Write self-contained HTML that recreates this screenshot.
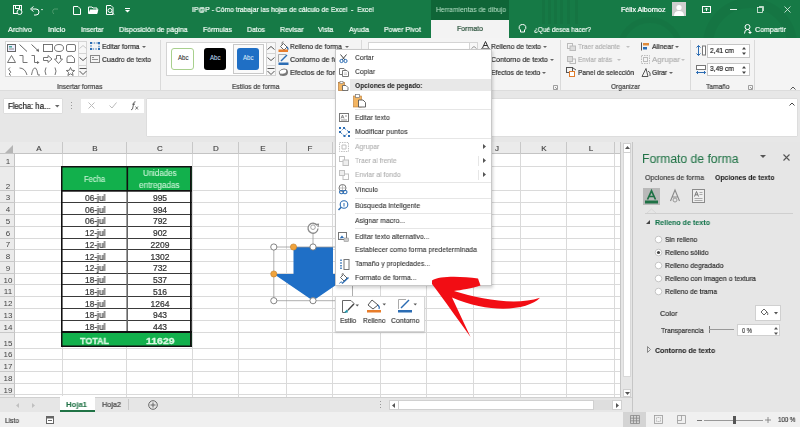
<!DOCTYPE html><html><head><meta charset="utf-8"><style>
*{margin:0;padding:0;box-sizing:border-box}
html,body{width:800px;height:427px;overflow:hidden;background:#fff;font-family:"Liberation Sans",sans-serif;position:relative}
.abs{position:absolute}
svg.abs{overflow:visible}
.t{position:absolute;white-space:nowrap;line-height:1;transform-origin:0 0;-webkit-text-stroke:0.22px currentColor;will-change:transform}
.b{-webkit-text-stroke:0.05px currentColor}
</style></head><body>
<div class="abs" style="left:0px;top:0px;width:800px;height:38px;background:#167a46"></div>
<svg class="abs" style="left:520px;top:0px;" width="280" height="38" viewBox="0 0 280 38"><rect x="22" y="0" width="3" height="24" fill="rgba(0,0,0,0.045)"/><rect x="28" y="0" width="3" height="24" fill="rgba(0,0,0,0.045)"/><rect x="34" y="0" width="3" height="24" fill="rgba(0,0,0,0.045)"/><rect x="40" y="0" width="3" height="24" fill="rgba(0,0,0,0.045)"/><rect x="47" y="0" width="3" height="24" fill="rgba(0,0,0,0.045)"/><rect x="55" y="0" width="3" height="24" fill="rgba(0,0,0,0.045)"/><circle cx="230" cy="45" r="42" fill="none" stroke="rgba(0,0,0,0.04)" stroke-width="10"/><circle cx="130" cy="50" r="30" fill="none" stroke="rgba(0,0,0,0.035)" stroke-width="6"/></svg>
<div class="abs" style="left:431px;top:0px;width:78px;height:19.5px;background:#0f6537"></div>
<div class="abs" style="left:431px;top:20px;width:78px;height:18px;background:#f3f3f3"></div>
<div class="t" style="left:436px;top:6.07px;font-size:7px;color:#b9e3c9;transform:scaleX(0.967);-webkit-text-stroke:0">Herramientas de dibujo</div>
<div class="t" style="left:457px;top:25.20px;font-size:7.8px;color:#2a523b;transform:scaleX(0.895);">Formato</div>
<div class="t" style="left:191.6px;top:6.11px;font-size:7.2px;color:#f2fbf5;transform:scaleX(0.941);">IP@P - Cómo trabajar las hojas de cálculo de Excel  -  Excel</div>
<div class="t" style="left:621px;top:6.07px;font-size:7px;color:#fff;transform:scaleX(1.012);">Félix Albornoz</div>
<div class="abs" style="left:672px;top:2px;width:14px;height:14px;background:#cfcfcf"></div>
<svg class="abs" style="left:672px;top:2px;" width="14" height="14" viewBox="0 0 14 14"><circle cx="7" cy="5.5" r="2.6" fill="#fff"/><path d="M2 14 Q2 9 7 9 Q12 9 12 14Z" fill="#fff"/></svg>
<div class="t" style="left:8px;top:25.65px;font-size:7.5px;color:#f2fbf5;transform:scaleX(0.960);">Archivo</div>
<div class="t" style="left:47.5px;top:25.65px;font-size:7.5px;color:#f2fbf5;transform:scaleX(1.000);">Inicio</div>
<div class="t" style="left:80.5px;top:25.65px;font-size:7.5px;color:#f2fbf5;transform:scaleX(0.885);">Insertar</div>
<div class="t" style="left:119px;top:25.65px;font-size:7.5px;color:#f2fbf5;transform:scaleX(0.934);">Disposición de página</div>
<div class="t" style="left:202.5px;top:25.65px;font-size:7.5px;color:#f2fbf5;transform:scaleX(0.928);">Fórmulas</div>
<div class="t" style="left:247.4px;top:25.65px;font-size:7.5px;color:#f2fbf5;transform:scaleX(0.919);">Datos</div>
<div class="t" style="left:280px;top:25.65px;font-size:7.5px;color:#f2fbf5;transform:scaleX(0.928);">Revisar</div>
<div class="t" style="left:317.5px;top:25.65px;font-size:7.5px;color:#f2fbf5;transform:scaleX(0.925);">Vista</div>
<div class="t" style="left:348.5px;top:25.65px;font-size:7.5px;color:#f2fbf5;transform:scaleX(0.947);">Ayuda</div>
<div class="t" style="left:384px;top:25.65px;font-size:7.5px;color:#f2fbf5;transform:scaleX(0.920);">Power Pivot</div>
<div class="t" style="left:534px;top:25.65px;font-size:7.5px;color:#f2fbf5;transform:scaleX(0.860);">¿Qué desea hacer?</div>
<div class="t" style="left:755px;top:25.65px;font-size:7.5px;color:#f2fbf5;transform:scaleX(0.942);">Compartir</div>
<svg class="abs" style="left:13px;top:5px;" width="10" height="10" viewBox="0 0 10 10"><rect x="0.5" y="0.5" width="8" height="8" fill="none" stroke="#fff" stroke-width="1"/><rect x="2.5" y="0.5" width="4" height="3" fill="none" stroke="#fff" stroke-width="1"/><circle cx="6.5" cy="7" r="2.5" fill="#167a46" stroke="#fff"/></svg>
<svg class="abs" style="left:30px;top:6px;" width="14" height="9" viewBox="0 0 14 9"><path d="M2 3 H6 A3 3 0 0 1 6 9 H4" fill="none" stroke="#fff" stroke-width="1"/><path d="M0.5 3 L3.5 0.5 M0.5 3 L3.5 5.5" fill="none" stroke="#fff" stroke-width="1"/><path d="M11 3 l2 0 l-1 1.5z" fill="#fff"/></svg>
<svg class="abs" style="left:51px;top:6px;" width="8" height="8" viewBox="0 0 8 8"><path d="M7 3 H3 A3 3 0 0 0 3 8" fill="none" stroke="#4c9a6c"/></svg>
<svg class="abs" style="left:73px;top:6px;" width="8" height="9" viewBox="0 0 8 9"><path d="M0.5 0.5 H5 L7.5 3 V8.5 H0.5Z" fill="none" stroke="#fff" stroke-width="1"/></svg>
<svg class="abs" style="left:88px;top:6px;" width="11" height="8" viewBox="0 0 11 8"><path d="M0.5 1 H4 L5 2 H9 V7.5 H0.5Z" fill="none" stroke="#fff" stroke-width="1"/><path d="M2 3.5 H10.5 L9 7.5 H0.5Z" fill="#fff"/></svg>
<svg class="abs" style="left:106px;top:5px;" width="9" height="10" viewBox="0 0 9 10"><path d="M0.5 0.5 H5 L7 2.5 V9.5 H0.5Z" fill="none" stroke="#fff" stroke-width="1"/><circle cx="4" cy="5.5" r="2" fill="none" stroke="#fff" stroke-width="1"/><path d="M5.5 7 L8 9.5" fill="none" stroke="#fff" stroke-width="1"/></svg>
<svg class="abs" style="left:125px;top:8px;" width="5" height="5" viewBox="0 0 5 5"><path d="M0 0.5 H5" stroke="#fff"/><path d="M0 2 L5 2 L2.5 4.5Z" fill="#fff"/></svg>
<svg class="abs" style="left:702px;top:6px;" width="9" height="7" viewBox="0 0 9 7"><rect x="0.5" y="0.5" width="8" height="6" fill="none" stroke="#fff" stroke-width="1"/><path d="M4.5 5 V2 M3 3.5 L4.5 2 L6 3.5" fill="none" stroke="#fff" stroke-width="1"/></svg>
<div class="abs" style="left:730px;top:9px;width:7px;height:0.8px;background:#e6f2ea"></div>
<svg class="abs" style="left:757px;top:6px;" width="7" height="7" viewBox="0 0 7 7"><rect x="0.5" y="1.5" width="5" height="5" fill="none" stroke="#e6f2ea" stroke-width="0.8"/><path d="M2 0.5 H6.5 V5" fill="none" stroke="#e6f2ea" stroke-width="0.8"/></svg>
<svg class="abs" style="left:784px;top:6px;" width="7" height="7" viewBox="0 0 7 7"><path d="M0.5 0.5 L6.5 6.5 M6.5 0.5 L0.5 6.5" fill="none" stroke="#e6f2ea" stroke-width="0.8"/></svg>
<svg class="abs" style="left:519px;top:24px;" width="7" height="10" viewBox="0 0 7 10"><path d="M3.5 0.5 A3 3 0 0 1 5.5 6 V8 H1.5 V6 A3 3 0 0 1 3.5 0.5Z" fill="none" stroke="#fff" stroke-width="1"/></svg>
<svg class="abs" style="left:744px;top:24px;" width="8" height="10" viewBox="0 0 8 10"><circle cx="3.5" cy="3" r="2.5" fill="none" stroke="#fff" stroke-width="1"/><path d="M0.5 9.5 Q0.5 5.5 3.5 5.5 Q5.5 5.5 6 7" fill="none" stroke="#fff" stroke-width="1"/><path d="M6 7 V10 M4.5 8.5 H7.5" fill="none" stroke="#fff" stroke-width="1"/></svg>
<div class="abs" style="left:0px;top:38px;width:800px;height:53px;background:#f4f4f4;border-bottom:1px solid #dcdcdc"></div>
<div class="abs" style="left:5px;top:41.4px;width:82px;height:36px;background:#fff;border:1px solid #d4d4d4"></div>
<div class="abs" style="left:77.5px;top:41.4px;width:9.5px;height:36px;background:#f7f7f7;border:1px solid #d4d4d4"></div>
<div class="abs" style="left:77.5px;top:53px;width:9.5px;height:1px;background:#d4d4d4"></div>
<div class="abs" style="left:77.5px;top:65px;width:9.5px;height:1px;background:#d4d4d4"></div>
<svg class="abs" style="left:78.5px;top:45px;" width="8" height="4" viewBox="0 0 8 4"><path d="M0.5 3.5 L4 0.5 L7.5 3.5" fill="none" stroke="#c8c8c8"/></svg>
<svg class="abs" style="left:78.5px;top:57px;" width="8" height="4" viewBox="0 0 8 4"><path d="M0.5 0.5 L4 3.5 L7.5 0.5" fill="none" stroke="#555"/></svg>
<svg class="abs" style="left:78.5px;top:67.5px;" width="8" height="7" viewBox="0 0 8 7"><path d="M0.5 0.5 H7.5 M0.5 3 L4 6.5 L7.5 3" fill="none" stroke="#555"/></svg>
<svg class="abs" style="left:7.1px;top:43.6px;" width="10" height="9" viewBox="0 0 10 9"><rect x="0.5" y="0.5" width="8" height="7" fill="#eef" stroke="#666"/><rect x="2" y="2" width="3" height="1.5" fill="#4a9"/><path d="M2 5 H7" stroke="#888"/></svg>
<svg class="abs" style="left:19.3px;top:43.6px;" width="10" height="9" viewBox="0 0 10 9"><path d="M0.5 0.5 L8 7.5" stroke="#666"/></svg>
<svg class="abs" style="left:30.9px;top:43.6px;" width="10" height="9" viewBox="0 0 10 9"><path d="M0.5 0.5 L8 7.5" stroke="#666"/><path d="M8 7.5 L5 7 L7.5 4.5Z" fill="#666"/></svg>
<svg class="abs" style="left:42.5px;top:43.6px;" width="10" height="9" viewBox="0 0 10 9"><rect x="0.5" y="0.5" width="9" height="7" fill="none" stroke="#666" stroke-width="0.9"/></svg>
<svg class="abs" style="left:54.0px;top:43.6px;" width="10" height="9" viewBox="0 0 10 9"><ellipse cx="5" cy="4" rx="4.5" ry="3.5" fill="none" stroke="#666" stroke-width="0.9"/></svg>
<svg class="abs" style="left:65.8px;top:43.6px;" width="10" height="9" viewBox="0 0 10 9"><rect x="0.5" y="0.5" width="9" height="7" rx="1.5" fill="none" stroke="#666" stroke-width="0.9"/></svg>
<svg class="abs" style="left:7.1px;top:55.1px;" width="10" height="9" viewBox="0 0 10 9"><path d="M4.5 0.5 L8.5 7.5 H0.5Z" fill="none" stroke="#666" stroke-width="0.9"/></svg>
<svg class="abs" style="left:19.3px;top:55.1px;" width="10" height="9" viewBox="0 0 10 9"><path d="M0.5 0.5 H4 V7.5 H8.5" fill="none" stroke="#666" stroke-width="0.9"/></svg>
<svg class="abs" style="left:30.9px;top:55.1px;" width="10" height="9" viewBox="0 0 10 9"><path d="M0.5 0.5 H3.5 V7.5 H7" fill="none" stroke="#666" stroke-width="0.9"/><path d="M8.5 7.5 L6 6 V9Z" fill="#666"/></svg>
<svg class="abs" style="left:42.5px;top:55.1px;" width="10" height="9" viewBox="0 0 10 9"><path d="M0.5 2.5 H5 V0.5 L9 4 L5 7.5 V5.5 H0.5Z" fill="none" stroke="#666" stroke-width="0.9"/></svg>
<svg class="abs" style="left:54.0px;top:55.1px;" width="10" height="9" viewBox="0 0 10 9"><path d="M2.5 0.5 H6.5 V4 H8.5 L4.5 8.5 L0.5 4 H2.5Z" fill="none" stroke="#666" stroke-width="0.9"/></svg>
<svg class="abs" style="left:65.8px;top:55.1px;" width="10" height="9" viewBox="0 0 10 9"><path d="M1 7.5 V3 Q1 0.5 4 1 Q6 0 7 2 Q9 3 8.5 5 V7.5Z" fill="none" stroke="#666" stroke-width="0.9"/></svg>
<svg class="abs" style="left:7.1px;top:67.2px;" width="10" height="9" viewBox="0 0 10 9"><path d="M3 0.5 Q0 2 3 4 Q5 5 2 7 L4 8.5" fill="none" stroke="#666" stroke-width="0.9"/></svg>
<svg class="abs" style="left:19.3px;top:67.2px;" width="10" height="9" viewBox="0 0 10 9"><path d="M0.5 1 Q6 1 8 8" fill="none" stroke="#666" stroke-width="0.9"/></svg>
<svg class="abs" style="left:30.9px;top:67.2px;" width="10" height="9" viewBox="0 0 10 9"><path d="M0.5 8 Q2 0 4.5 1 Q6 2 7 8 H9" fill="none" stroke="#666" stroke-width="0.9"/></svg>
<svg class="abs" style="left:42.5px;top:67.2px;" width="10" height="9" viewBox="0 0 10 9"><path d="M3 0.5 Q1 4 3 8" fill="none" stroke="#666" stroke-width="0.9"/></svg>
<svg class="abs" style="left:54.0px;top:67.2px;" width="10" height="9" viewBox="0 0 10 9"><path d="M1 0.5 Q3 4 1 8" fill="none" stroke="#666" stroke-width="0.9"/></svg>
<svg class="abs" style="left:65.8px;top:67.2px;" width="10" height="9" viewBox="0 0 10 9"><path d="M4.5 0.5 L5.7 3.3 L8.7 3.5 L6.4 5.4 L7.1 8.5 L4.5 6.8 L1.9 8.5 L2.6 5.4 L0.3 3.5 L3.3 3.3Z" fill="none" stroke="#666" stroke-width="0.9"/></svg>
<svg class="abs" style="left:90px;top:42px;" width="10" height="8" viewBox="0 0 10 8"><rect x="1" y="1" width="8" height="6" fill="none" stroke="#2b6cb3" stroke-dasharray="1.5 1.2"/><rect x="0" y="0" width="2" height="2" fill="#2b6cb3"/><rect x="8" y="0" width="2" height="2" fill="#2b6cb3"/><rect x="0" y="6" width="2" height="2" fill="#2b6cb3"/><rect x="8" y="6" width="2" height="2" fill="#2b6cb3"/></svg>
<div class="t" style="left:102px;top:42.73px;font-size:8px;color:#333;transform:scaleX(0.861);">Editar forma</div>
<svg class="abs" style="left:141.5px;top:45.8px;" width="4" height="2" viewBox="0 0 4 2"><path d="M0 0 H4 L2 2Z" fill="#666"/></svg>
<svg class="abs" style="left:90px;top:55px;" width="10" height="8" viewBox="0 0 10 8"><rect x="0.5" y="0.5" width="9" height="7" fill="#f4f4f4" stroke="#888"/><path d="M2 2.5 H4 M2 4.5 H8" stroke="#777" stroke-width="0.8"/></svg>
<div class="t" style="left:102px;top:55.73px;font-size:8px;color:#333;transform:scaleX(0.861);">Cuadro de texto</div>
<div class="t" style="left:57px;top:83.45px;font-size:7.5px;color:#444;transform:scaleX(0.902);">Insertar formas</div>
<div class="abs" style="left:159.5px;top:40px;width:1px;height:50px;background:#dadada"></div>
<div class="abs" style="left:165.5px;top:42px;width:110px;height:34px;background:#fff;border:1px solid #d4d4d4"></div>
<div class="abs" style="left:171px;top:47.8px;width:23px;height:21.8px;background:#fff;border:1px solid #a8d08d;border-radius:3px"></div>
<div class="t" style="left:177.5px;top:54.07px;font-size:7px;color:#333;transform:scaleX(0.871);-webkit-text-stroke:0.1px currentColor;will-change:auto">Abc</div>
<div class="abs" style="left:204px;top:47.8px;width:22px;height:21.8px;background:#000;border-radius:3px"></div>
<div class="t" style="left:210px;top:54.07px;font-size:7px;color:#b8d3ea;transform:scaleX(0.871);-webkit-text-stroke:0.1px currentColor;will-change:auto">Abc</div>
<div class="abs" style="left:232.5px;top:43.5px;width:31.5px;height:30.5px;background:#fafafa;border:1.5px solid #c8c8c8"></div>
<div class="abs" style="left:237px;top:47.8px;width:22px;height:21.8px;background:#1f6fc5;border-radius:3px"></div>
<div class="t" style="left:243px;top:54.07px;font-size:7px;color:#d5e6f7;transform:scaleX(0.871);-webkit-text-stroke:0.1px currentColor;will-change:auto">Abc</div>
<div class="abs" style="left:265.5px;top:42px;width:10px;height:34px;background:#f7f7f7;border:1px solid #d4d4d4"></div>
<div class="abs" style="left:265.5px;top:53px;width:10px;height:1px;background:#d4d4d4"></div>
<div class="abs" style="left:265.5px;top:65px;width:10px;height:1px;background:#d4d4d4"></div>
<svg class="abs" style="left:266.5px;top:45.5px;" width="8" height="4" viewBox="0 0 8 4"><path d="M0.5 3.5 L4 0.5 L7.5 3.5" fill="none" stroke="#555"/></svg>
<svg class="abs" style="left:266.5px;top:57px;" width="8" height="4" viewBox="0 0 8 4"><path d="M0.5 0.5 L4 3.5 L7.5 0.5" fill="none" stroke="#555"/></svg>
<svg class="abs" style="left:266.5px;top:67.5px;" width="8" height="7" viewBox="0 0 8 7"><path d="M0.5 0.5 H7.5 M0.5 3 L4 6.5 L7.5 3" fill="none" stroke="#555"/></svg>
<svg class="abs" style="left:277.5px;top:41px;" width="11" height="11" viewBox="0 0 11 11"><path d="M2.5 5.5 L5.5 2.5 L9 6 L6 9Z" fill="#fff" stroke="#555" stroke-width="0.9"/><path d="M4 3.5 Q3.5 0.5 5.5 0.8" fill="none" stroke="#555" stroke-width="0.8"/><path d="M9 6 Q10.5 7.5 9.8 9" fill="none" stroke="#2b6cb3" stroke-width="1.2"/><rect x="0.5" y="8.5" width="9.5" height="2.5" fill="#e87d2b"/></svg>
<div class="t" style="left:290px;top:42.73px;font-size:8px;color:#333;transform:scaleX(0.850);">Relleno de forma</div>
<svg class="abs" style="left:344.5px;top:45.8px;" width="4" height="2" viewBox="0 0 4 2"><path d="M0 0 H4 L2 2Z" fill="#666"/></svg>
<svg class="abs" style="left:277.5px;top:54px;" width="11" height="11" viewBox="0 0 11 11"><path d="M0.5 8 V0.5 H8" fill="none" stroke="#999" stroke-width="0.8"/><path d="M3 7 L9 1" stroke="#2b6cb3" stroke-width="1.4"/><rect x="0.5" y="8.5" width="10" height="2.5" fill="#2b6cb3"/></svg>
<div class="t" style="left:290px;top:55.73px;font-size:8px;color:#333;transform:scaleX(0.900);">Contorno de forma</div>
<svg class="abs" style="left:277.5px;top:67.5px;" width="11" height="9" viewBox="0 0 11 9"><path d="M2 7.5 Q0.5 4 3 2 Q6 0 9 1.5 Q11 4 9 7 Q6 8.5 2 7.5Z" fill="#777"/><path d="M1.5 6 Q0.5 3 3 1.8 Q6 0.5 8.5 1.5 Q9 4 7.5 5.5 Q5 6.5 1.5 6Z" fill="#fff" stroke="#666" stroke-width="0.7"/></svg>
<div class="t" style="left:290px;top:68.73px;font-size:8px;color:#333;transform:scaleX(0.910);">Efectos de forma</div>
<div class="t" style="left:231.5px;top:83.45px;font-size:7.5px;color:#444;transform:scaleX(0.883);">Estilos de forma</div>
<div class="abs" style="left:361px;top:40px;width:1px;height:50px;background:#dadada"></div>
<div class="abs" style="left:367.5px;top:41.5px;width:110px;height:35px;background:#fff;border:1px solid #d4d4d4"></div>
<div class="abs" style="left:469px;top:41.5px;width:8.5px;height:12px;background:#f7f7f7;border:1px solid #d4d4d4"></div>
<svg class="abs" style="left:470.5px;top:45.5px;" width="6" height="3" viewBox="0 0 6 3"><path d="M0.5 2.5 L3 0.5 L5.5 2.5" fill="none" stroke="#999"/></svg>
<svg class="abs" style="left:480.5px;top:41px;" width="9" height="9" viewBox="0 0 9 9"><path d="M1.5 7 L4.5 0.5 L7.5 7 M2.8 4.5 H6.2" fill="none" stroke="#333" stroke-width="1"/><rect x="0" y="7.5" width="9" height="1.3" fill="#222"/></svg>
<div class="t" style="left:491px;top:42.73px;font-size:8px;color:#333;transform:scaleX(0.865);">Relleno de texto</div>
<svg class="abs" style="left:542.5px;top:45.8px;" width="4" height="2" viewBox="0 0 4 2"><path d="M0 0 H4 L2 2Z" fill="#666"/></svg>
<div class="t" style="left:491px;top:55.73px;font-size:8px;color:#333;transform:scaleX(0.892);">Contorno de texto</div>
<svg class="abs" style="left:549.5px;top:58.8px;" width="4" height="2" viewBox="0 0 4 2"><path d="M0 0 H4 L2 2Z" fill="#666"/></svg>
<div class="t" style="left:491px;top:68.73px;font-size:8px;color:#333;transform:scaleX(0.858);">Efectos de texto</div>
<svg class="abs" style="left:542px;top:71.8px;" width="4" height="2" viewBox="0 0 4 2"><path d="M0 0 H4 L2 2Z" fill="#666"/></svg>
<svg class="abs" style="left:553px;top:85px;" width="5" height="5" viewBox="0 0 5 5"><path d="M0.5 0.5 H4.5 V4.5 H0.5Z M2 2 L4 4" fill="none" stroke="#888" stroke-width="0.8"/></svg>
<div class="abs" style="left:559.5px;top:40px;width:1px;height:50px;background:#dadada"></div>
<svg class="abs" style="left:566.5px;top:43px;" width="9" height="8" viewBox="0 0 9 8"><rect x="0.5" y="0.5" width="5" height="5" fill="none" stroke="#bbb"/><rect x="3" y="3" width="5.5" height="4.5" fill="#ddd" stroke="#bbb"/></svg>
<div class="t" style="left:578px;top:42.73px;font-size:8px;color:#b3b3b3;transform:scaleX(0.812);">Traer adelante</div>
<svg class="abs" style="left:626px;top:45.8px;" width="4" height="2" viewBox="0 0 4 2"><path d="M0 0 H4 L2 2Z" fill="#c0c0c0"/></svg>
<svg class="abs" style="left:566.5px;top:56px;" width="9" height="8" viewBox="0 0 9 8"><rect x="3" y="3" width="5.5" height="4.5" fill="none" stroke="#bbb"/><rect x="0.5" y="0.5" width="5" height="5" fill="#ddd" stroke="#bbb"/></svg>
<div class="t" style="left:578px;top:55.73px;font-size:8px;color:#b3b3b3;transform:scaleX(0.797);">Enviar atrás</div>
<svg class="abs" style="left:617px;top:58.8px;" width="4" height="2" viewBox="0 0 4 2"><path d="M0 0 H4 L2 2Z" fill="#c0c0c0"/></svg>
<svg class="abs" style="left:566px;top:67px;" width="11" height="10" viewBox="0 0 11 10"><rect x="0.5" y="0.5" width="6" height="5" fill="none" stroke="#555"/><rect x="3.5" y="4.5" width="5" height="5" fill="#fff" stroke="#e07b2a"/><path d="M7 1 L10 3" stroke="#555"/></svg>
<div class="t" style="left:578px;top:69.23px;font-size:8px;color:#333;transform:scaleX(0.834);">Panel de selección</div>
<svg class="abs" style="left:641px;top:42px;" width="9" height="9" viewBox="0 0 9 9"><path d="M0.5 0.5 V8.5" stroke="#555"/><rect x="2" y="1" width="6" height="2.5" fill="#e08b3a"/><rect x="2" y="5" width="4" height="2.5" fill="#2b6cb3"/></svg>
<div class="t" style="left:651.5px;top:42.73px;font-size:8px;color:#333;transform:scaleX(0.863);">Alinear</div>
<svg class="abs" style="left:675px;top:45.8px;" width="4" height="2" viewBox="0 0 4 2"><path d="M0 0 H4 L2 2Z" fill="#666"/></svg>
<svg class="abs" style="left:641px;top:55px;" width="9" height="9" viewBox="0 0 9 9"><rect x="0.5" y="0.5" width="8" height="8" fill="none" stroke="#bbb" stroke-dasharray="1.5 1"/><rect x="2.5" y="2.5" width="4" height="4" fill="none" stroke="#bbb"/></svg>
<div class="t" style="left:652px;top:55.73px;font-size:8px;color:#b3b3b3;transform:scaleX(0.984);">Agrupar</div>
<svg class="abs" style="left:681px;top:58.8px;" width="4" height="2" viewBox="0 0 4 2"><path d="M0 0 H4 L2 2Z" fill="#c0c0c0"/></svg>
<svg class="abs" style="left:641px;top:68px;" width="10" height="9" viewBox="0 0 10 9"><path d="M1 8.5 L5 0.5 L7 8.5Z" fill="none" stroke="#555"/><path d="M7 3 Q10 4 9 8" fill="none" stroke="#555"/></svg>
<div class="t" style="left:652px;top:69.23px;font-size:8px;color:#333;transform:scaleX(0.844);">Girar</div>
<svg class="abs" style="left:668.5px;top:71.8px;" width="4" height="2" viewBox="0 0 4 2"><path d="M0 0 H4 L2 2Z" fill="#666"/></svg>
<div class="t" style="left:610.5px;top:83.45px;font-size:7.5px;color:#444;transform:scaleX(0.881);">Organizar</div>
<div class="abs" style="left:689.5px;top:40px;width:1px;height:50px;background:#dadada"></div>
<svg class="abs" style="left:696px;top:45px;" width="10" height="11" viewBox="0 0 10 11"><path d="M2.5 0.5 V10.5 M0.5 2.5 L2.5 0.5 L4.5 2.5 M0.5 8.5 L2.5 10.5 L4.5 8.5" fill="none" stroke="#2b6cb3"/><rect x="6.5" y="1" width="3" height="9" fill="#fff" stroke="#777"/></svg>
<div class="abs" style="left:707px;top:44px;width:43px;height:13.5px;background:#fff;border:1px solid #c6c6c6"></div>
<div class="t" style="left:709.5px;top:46.73px;font-size:8px;color:#222;transform:scaleX(0.843);">2,41 cm</div>
<svg class="abs" style="left:742px;top:47px;" width="4" height="8" viewBox="0 0 4 8"><path d="M0 2.5 L2 0 L4 2.5Z M0 5.5 H4 L2 8Z" fill="#444"/></svg>
<svg class="abs" style="left:696px;top:65px;" width="10" height="10" viewBox="0 0 10 10"><rect x="0.5" y="0.5" width="9" height="4" fill="#fff" stroke="#777"/><path d="M0.5 7.5 H9.5 M2 6 L0.5 7.5 L2 9 M8 6 L9.5 7.5 L8 9" fill="none" stroke="#2b6cb3"/></svg>
<div class="abs" style="left:707px;top:62.5px;width:43px;height:13.5px;background:#fff;border:1px solid #c6c6c6"></div>
<div class="t" style="left:709.5px;top:65.23px;font-size:8px;color:#222;transform:scaleX(0.843);">3,49 cm</div>
<svg class="abs" style="left:742px;top:65.5px;" width="4" height="8" viewBox="0 0 4 8"><path d="M0 2.5 L2 0 L4 2.5Z M0 5.5 H4 L2 8Z" fill="#444"/></svg>
<div class="t" style="left:705.5px;top:83.45px;font-size:7.5px;color:#444;transform:scaleX(0.881);">Tamaño</div>
<svg class="abs" style="left:747.5px;top:85px;" width="5" height="5" viewBox="0 0 5 5"><path d="M0.5 0.5 H4.5 V4.5 H0.5Z M2 2 L4 4" fill="none" stroke="#888" stroke-width="0.8"/></svg>
<div class="abs" style="left:754px;top:40px;width:1px;height:50px;background:#dadada"></div>
<svg class="abs" style="left:789.5px;top:85.5px;" width="6" height="4" viewBox="0 0 6 4"><path d="M0.5 3.5 L3 1 L5.5 3.5" fill="none" stroke="#555"/></svg>
<div class="abs" style="left:0px;top:91px;width:800px;height:51px;background:#e7e7e7"></div>
<div class="abs" style="left:3.5px;top:98.5px;width:58.5px;height:14.5px;background:#fff;box-shadow:0 0 1px rgba(0,0,0,0.25)"></div>
<div class="t" style="left:7.5px;top:102.66px;font-size:8.2px;color:#222;transform:scaleX(0.942);">Flecha: ha...</div>
<svg class="abs" style="left:55px;top:104.5px;" width="4.5" height="2.5" viewBox="0 0 4.5 2.5"><path d="M0 0 H4.5 L2.25 2.5Z" fill="#666"/></svg>
<div class="abs" style="left:71px;top:102px;width:1px;height:1px;background:#999"></div>
<div class="abs" style="left:71px;top:105px;width:1px;height:1px;background:#999"></div>
<div class="abs" style="left:71px;top:108px;width:1px;height:1px;background:#999"></div>
<div class="abs" style="left:81px;top:99px;width:63px;height:14px;background:#fff"></div>
<svg class="abs" style="left:88px;top:102px;" width="7" height="7" viewBox="0 0 7 7"><path d="M0.5 0.5 L6.5 6.5 M6.5 0.5 L0.5 6.5" stroke="#bbb" fill="none"/></svg>
<svg class="abs" style="left:109px;top:102px;" width="8" height="7" viewBox="0 0 8 7"><path d="M0.5 3.5 L3 6 L7.5 0.5" stroke="#bbb" fill="none"/></svg>
<svg class="abs" style="left:130px;top:101px;" width="9" height="9" viewBox="0 0 9 9"><path d="M5.5 0.8 Q4.2 0.3 3.8 2 L2.5 8 Q2.1 9 1 8.6 M2.2 3.2 H5" fill="none" stroke="#555" stroke-width="0.9"/><path d="M5.5 5.5 L8 8.5 M8 5.5 L5.5 8.5" stroke="#555" stroke-width="0.8"/></svg>
<div class="abs" style="left:147px;top:99px;width:650px;height:37px;background:#fff;box-shadow:0 0 1px rgba(0,0,0,0.25)"></div>
<svg class="abs" style="left:789px;top:102px;" width="6" height="4" viewBox="0 0 6 4"><path d="M0.5 3.5 L3 1 L5.5 3.5" stroke="#444" fill="none"/></svg>
<div class="abs" style="left:0px;top:142px;width:621px;height:12px;background:#ebebeb;border-bottom:1px solid #c4c4c4"></div>
<div class="abs" style="left:0px;top:154px;width:15px;height:243px;background:#ebebeb;border-right:1px solid #c4c4c4"></div>
<svg class="abs" style="left:5px;top:145px;" width="8" height="8" viewBox="0 0 8 8"><path d="M8 0 V8 H0Z" fill="#b5b5b5"/></svg>
<svg class="abs" style="left:0px;top:142px;" width="621" height="255" viewBox="0 0 621 255"><rect x="62" y="0" width="1" height="255" fill="#dadada"/><rect x="62" y="0" width="1" height="12" fill="#c8c8c8"/><rect x="126" y="0" width="1" height="255" fill="#dadada"/><rect x="126" y="0" width="1" height="12" fill="#c8c8c8"/><rect x="192" y="0" width="1" height="255" fill="#dadada"/><rect x="192" y="0" width="1" height="12" fill="#c8c8c8"/><rect x="238" y="0" width="1" height="255" fill="#dadada"/><rect x="238" y="0" width="1" height="12" fill="#c8c8c8"/><rect x="286" y="0" width="1" height="255" fill="#dadada"/><rect x="286" y="0" width="1" height="12" fill="#c8c8c8"/><rect x="332" y="0" width="1" height="255" fill="#dadada"/><rect x="332" y="0" width="1" height="12" fill="#c8c8c8"/><rect x="380" y="0" width="1" height="255" fill="#dadada"/><rect x="380" y="0" width="1" height="12" fill="#c8c8c8"/><rect x="426" y="0" width="1" height="255" fill="#dadada"/><rect x="426" y="0" width="1" height="12" fill="#c8c8c8"/><rect x="473" y="0" width="1" height="255" fill="#dadada"/><rect x="473" y="0" width="1" height="12" fill="#c8c8c8"/><rect x="520" y="0" width="1" height="255" fill="#dadada"/><rect x="520" y="0" width="1" height="12" fill="#c8c8c8"/><rect x="566" y="0" width="1" height="255" fill="#dadada"/><rect x="566" y="0" width="1" height="12" fill="#c8c8c8"/><rect x="614" y="0" width="1" height="255" fill="#dadada"/><rect x="614" y="0" width="1" height="12" fill="#c8c8c8"/><rect x="15" y="24" width="606" height="1" fill="#dadada"/><rect x="0" y="24" width="15" height="1" fill="#c8c8c8"/><rect x="15" y="48" width="606" height="1" fill="#dadada"/><rect x="0" y="48" width="15" height="1" fill="#c8c8c8"/><rect x="15" y="60" width="606" height="1" fill="#dadada"/><rect x="0" y="60" width="15" height="1" fill="#c8c8c8"/><rect x="15" y="72" width="606" height="1" fill="#dadada"/><rect x="0" y="72" width="15" height="1" fill="#c8c8c8"/><rect x="15" y="84" width="606" height="1" fill="#dadada"/><rect x="0" y="84" width="15" height="1" fill="#c8c8c8"/><rect x="15" y="96" width="606" height="1" fill="#dadada"/><rect x="0" y="96" width="15" height="1" fill="#c8c8c8"/><rect x="15" y="107" width="606" height="1" fill="#dadada"/><rect x="0" y="107" width="15" height="1" fill="#c8c8c8"/><rect x="15" y="119" width="606" height="1" fill="#dadada"/><rect x="0" y="119" width="15" height="1" fill="#c8c8c8"/><rect x="15" y="131" width="606" height="1" fill="#dadada"/><rect x="0" y="131" width="15" height="1" fill="#c8c8c8"/><rect x="15" y="142" width="606" height="1" fill="#dadada"/><rect x="0" y="142" width="15" height="1" fill="#c8c8c8"/><rect x="15" y="154" width="606" height="1" fill="#dadada"/><rect x="0" y="154" width="15" height="1" fill="#c8c8c8"/><rect x="15" y="166" width="606" height="1" fill="#dadada"/><rect x="0" y="166" width="15" height="1" fill="#c8c8c8"/><rect x="15" y="178" width="606" height="1" fill="#dadada"/><rect x="0" y="178" width="15" height="1" fill="#c8c8c8"/><rect x="15" y="190" width="606" height="1" fill="#dadada"/><rect x="0" y="190" width="15" height="1" fill="#c8c8c8"/><rect x="15" y="206" width="606" height="1" fill="#dadada"/><rect x="0" y="206" width="15" height="1" fill="#c8c8c8"/><rect x="15" y="217" width="606" height="1" fill="#dadada"/><rect x="0" y="217" width="15" height="1" fill="#c8c8c8"/><rect x="15" y="229" width="606" height="1" fill="#dadada"/><rect x="0" y="229" width="15" height="1" fill="#c8c8c8"/><rect x="15" y="241" width="606" height="1" fill="#dadada"/><rect x="0" y="241" width="15" height="1" fill="#c8c8c8"/><rect x="15" y="252" width="606" height="1" fill="#dadada"/><rect x="0" y="252" width="15" height="1" fill="#c8c8c8"/></svg>
<div class="t" style="left:35.5px;top:145.23px;font-size:8px;color:#444;width:6px;text-align:center;-webkit-text-stroke:0.15px">A</div>
<div class="t" style="left:91.5px;top:145.23px;font-size:8px;color:#444;width:6px;text-align:center;-webkit-text-stroke:0.15px">B</div>
<div class="t" style="left:156.5px;top:145.23px;font-size:8px;color:#444;width:6px;text-align:center;-webkit-text-stroke:0.15px">C</div>
<div class="t" style="left:212.5px;top:145.23px;font-size:8px;color:#444;width:6px;text-align:center;-webkit-text-stroke:0.15px">D</div>
<div class="t" style="left:259.5px;top:145.23px;font-size:8px;color:#444;width:6px;text-align:center;-webkit-text-stroke:0.15px">E</div>
<div class="t" style="left:306.5px;top:145.23px;font-size:8px;color:#444;width:6px;text-align:center;-webkit-text-stroke:0.15px">F</div>
<div class="t" style="left:353.5px;top:145.23px;font-size:8px;color:#444;width:6px;text-align:center;-webkit-text-stroke:0.15px">G</div>
<div class="t" style="left:400.5px;top:145.23px;font-size:8px;color:#444;width:6px;text-align:center;-webkit-text-stroke:0.15px">H</div>
<div class="t" style="left:447.25px;top:145.23px;font-size:8px;color:#444;width:6px;text-align:center;-webkit-text-stroke:0.15px">I</div>
<div class="t" style="left:494.0px;top:145.23px;font-size:8px;color:#444;width:6px;text-align:center;-webkit-text-stroke:0.15px">J</div>
<div class="t" style="left:540.75px;top:145.23px;font-size:8px;color:#444;width:6px;text-align:center;-webkit-text-stroke:0.15px">K</div>
<div class="t" style="left:587.5px;top:145.23px;font-size:8px;color:#444;width:6px;text-align:center;-webkit-text-stroke:0.15px">L</div>
<div class="t" style="left:0.5px;top:157.63px;font-size:8px;color:#444;width:14px;text-align:center;-webkit-text-stroke:0">1</div>
<div class="t" style="left:0.5px;top:182.63px;font-size:8px;color:#444;width:14px;text-align:center;-webkit-text-stroke:0">2</div>
<div class="t" style="left:0.5px;top:194.38px;font-size:8px;color:#444;width:14px;text-align:center;-webkit-text-stroke:0">3</div>
<div class="t" style="left:0.5px;top:206.13px;font-size:8px;color:#444;width:14px;text-align:center;-webkit-text-stroke:0">4</div>
<div class="t" style="left:0.5px;top:217.88px;font-size:8px;color:#444;width:14px;text-align:center;-webkit-text-stroke:0">5</div>
<div class="t" style="left:0.5px;top:229.63px;font-size:8px;color:#444;width:14px;text-align:center;-webkit-text-stroke:0">6</div>
<div class="t" style="left:0.5px;top:241.38px;font-size:8px;color:#444;width:14px;text-align:center;-webkit-text-stroke:0">7</div>
<div class="t" style="left:0.5px;top:253.13px;font-size:8px;color:#444;width:14px;text-align:center;-webkit-text-stroke:0">8</div>
<div class="t" style="left:0.5px;top:264.88px;font-size:8px;color:#444;width:14px;text-align:center;-webkit-text-stroke:0">9</div>
<div class="t" style="left:0.5px;top:276.63px;font-size:8px;color:#444;width:14px;text-align:center;-webkit-text-stroke:0">10</div>
<div class="t" style="left:0.5px;top:288.38px;font-size:8px;color:#444;width:14px;text-align:center;-webkit-text-stroke:0">11</div>
<div class="t" style="left:0.5px;top:300.13px;font-size:8px;color:#444;width:14px;text-align:center;-webkit-text-stroke:0">12</div>
<div class="t" style="left:0.5px;top:311.88px;font-size:8px;color:#444;width:14px;text-align:center;-webkit-text-stroke:0">13</div>
<div class="t" style="left:0.5px;top:323.63px;font-size:8px;color:#444;width:14px;text-align:center;-webkit-text-stroke:0">14</div>
<div class="t" style="left:0.5px;top:339.63px;font-size:8px;color:#444;width:14px;text-align:center;-webkit-text-stroke:0">15</div>
<div class="t" style="left:0.5px;top:351.38px;font-size:8px;color:#444;width:14px;text-align:center;-webkit-text-stroke:0">16</div>
<div class="t" style="left:0.5px;top:363.13px;font-size:8px;color:#444;width:14px;text-align:center;-webkit-text-stroke:0">17</div>
<div class="t" style="left:0.5px;top:374.88px;font-size:8px;color:#444;width:14px;text-align:center;-webkit-text-stroke:0">18</div>
<div class="t" style="left:0.5px;top:386.63px;font-size:8px;color:#444;width:14px;text-align:center;-webkit-text-stroke:0">19</div>
<div class="abs" style="left:620px;top:142px;width:1px;height:255px;background:#c6c6c6"></div>
<div class="abs" style="left:621px;top:142px;width:12px;height:255px;background:#e6e6e6"></div>
<div class="abs" style="left:623px;top:143px;width:8px;height:234px;background:#fff;border:1px solid #d8d8d8"></div>
<div class="abs" style="left:623px;top:143px;width:8px;height:10px;background:#fff;border:1px solid #d0d0d0"></div>
<svg class="abs" style="left:624.5px;top:146px;" width="5" height="3" viewBox="0 0 5 3"><path d="M0 3 L2.5 0 L5 3Z" fill="#555"/></svg>
<div class="abs" style="left:623px;top:389px;width:8px;height:8px;background:#fff;border:1px solid #d0d0d0"></div>
<svg class="abs" style="left:624.5px;top:392px;" width="5" height="3" viewBox="0 0 5 3"><path d="M0 0 H5 L2.5 3Z" fill="#555"/></svg>
<div class="abs" style="left:632px;top:142px;width:1px;height:271px;background:#c6c6c6"></div>
<div class="abs" style="left:0px;top:397px;width:632px;height:15px;background:#e6e6e6;border-top:1px solid #d0d0d0"></div>
<svg class="abs" style="left:16px;top:403px;" width="3" height="5" viewBox="0 0 3 5"><path d="M3 0 L0 2.5 L3 5Z" fill="#c0c0c0"/></svg>
<svg class="abs" style="left:32px;top:403px;" width="3" height="5" viewBox="0 0 3 5"><path d="M0 0 L3 2.5 L0 5Z" fill="#c0c0c0"/></svg>
<div class="abs" style="left:60px;top:396px;width:35px;height:15px;background:#fff"></div>
<div class="abs" style="left:60px;top:410px;width:35px;height:1.5px;background:#217346"></div>
<div class="t b" style="left:66px;top:400.73px;font-size:8px;color:#217346;font-weight:bold;transform:scaleX(0.964);">Hoja1</div>
<div class="t" style="left:102px;top:400.73px;font-size:8px;color:#444;transform:scaleX(0.909);">Hoja2</div>
<div class="abs" style="left:128px;top:399px;width:1px;height:11px;background:#c8c8c8"></div>
<svg class="abs" style="left:148px;top:400px;" width="10" height="10" viewBox="0 0 10 10"><circle cx="5" cy="5" r="4.3" fill="none" stroke="#666"/><path d="M5 2.5 V7.5 M2.5 5 H7.5" stroke="#666"/></svg>
<div class="abs" style="left:379.5px;top:401px;width:1px;height:1px;background:#999"></div>
<div class="abs" style="left:379.5px;top:404px;width:1px;height:1px;background:#999"></div>
<div class="abs" style="left:379.5px;top:407px;width:1px;height:1px;background:#999"></div>
<div class="abs" style="left:389px;top:400px;width:233px;height:10px;background:#dedede"></div>
<div class="abs" style="left:389px;top:400px;width:10px;height:10px;background:#fff;border:1px solid #d0d0d0"></div>
<svg class="abs" style="left:392px;top:403px;" width="3" height="5" viewBox="0 0 3 5"><path d="M3 0 L0 2.5 L3 5Z" fill="#555"/></svg>
<div class="abs" style="left:398px;top:400px;width:196px;height:10px;background:#fff;border:1px solid #d0d0d0"></div>
<div class="abs" style="left:612px;top:400px;width:10px;height:10px;background:#fff;border:1px solid #d0d0d0"></div>
<svg class="abs" style="left:616px;top:403px;" width="3" height="5" viewBox="0 0 3 5"><path d="M0 0 L3 2.5 L0 5Z" fill="#555"/></svg>
<div class="abs" style="left:0px;top:412px;width:800px;height:15px;background:#f0f0f0"></div>
<div class="t" style="left:5px;top:416.85px;font-size:7.5px;color:#444;transform:scaleX(0.884);">Listo</div>
<svg class="abs" style="left:46px;top:416px;" width="8" height="8" viewBox="0 0 8 8"><rect x="0.5" y="0.5" width="7" height="7" fill="#fff" stroke="#666"/><rect x="0.5" y="0.5" width="7" height="2" fill="#666"/><rect x="2" y="4" width="4" height="1" fill="#666"/></svg>
<div class="abs" style="left:623px;top:412px;width:23px;height:15px;background:#d4d4d4"></div>
<svg class="abs" style="left:630px;top:415px;" width="10" height="9" viewBox="0 0 10 9"><path d="M0.5 0.5 H9.5 V8.5 H0.5Z M3.5 0.5 V8.5 M6.5 0.5 V8.5 M0.5 3.2 H9.5 M0.5 5.8 H9.5" fill="none" stroke="#888" stroke-width="0.8"/></svg>
<svg class="abs" style="left:654px;top:415px;" width="9" height="9" viewBox="0 0 9 9"><rect x="0.5" y="0.5" width="8" height="8" fill="none" stroke="#999" stroke-width="0.8"/><rect x="2.5" y="2.5" width="4" height="4" fill="none" stroke="#aaa" stroke-width="0.8" stroke-dasharray="1 0.6"/></svg>
<svg class="abs" style="left:677px;top:415px;" width="9" height="9" viewBox="0 0 9 9"><path d="M0.5 0.5 H8.5 V8.5 H0.5Z M0.5 5.5 H4.5 V0.5" fill="none" stroke="#999" stroke-width="0.8"/></svg>
<div class="abs" style="left:697px;top:419.5px;width:5px;height:0.8px;background:#777"></div>
<div class="abs" style="left:704px;top:419.5px;width:59px;height:1px;background:#999"></div>
<div class="abs" style="left:733px;top:416px;width:3px;height:8px;background:#555"></div>
<svg class="abs" style="left:765px;top:417px;" width="6" height="6" viewBox="0 0 6 6"><path d="M3 0 V6 M0 3 H6" stroke="#777" stroke-width="0.8"/></svg>
<div class="t" style="left:778px;top:416.15px;font-size:7.5px;color:#444;transform:scaleX(0.823);">100 %</div>
<div class="abs" style="left:61px;top:166px;width:131px;height:25px;background:#12b04c"></div>
<div class="abs" style="left:61px;top:332px;width:131px;height:15px;background:#12b04c"></div>
<svg class="abs" style="left:61px;top:166px;" width="131" height="181" viewBox="0 0 131 181"><rect x="0" y="36" width="131" height="1" fill="#3a3a3a"/><rect x="0" y="48" width="131" height="1" fill="#3a3a3a"/><rect x="0" y="60" width="131" height="1" fill="#3a3a3a"/><rect x="0" y="72" width="131" height="1" fill="#3a3a3a"/><rect x="0" y="83" width="131" height="1" fill="#3a3a3a"/><rect x="0" y="95" width="131" height="1" fill="#3a3a3a"/><rect x="0" y="107" width="131" height="1" fill="#3a3a3a"/><rect x="0" y="118" width="131" height="1" fill="#3a3a3a"/><rect x="0" y="130" width="131" height="1" fill="#3a3a3a"/><rect x="0" y="142" width="131" height="1" fill="#3a3a3a"/><rect x="0" y="154" width="131" height="1" fill="#3a3a3a"/><rect x="65.5" y="0" width="1.6" height="25" fill="#111"/><rect x="65.5" y="25" width="1.5" height="141" fill="#666"/><rect x="0" y="0" width="131" height="1.5" fill="#111"/><rect x="0" y="24" width="131" height="1.7" fill="#111"/><rect x="0" y="165" width="131" height="2" fill="#111"/><rect x="0" y="179.5" width="131" height="1.5" fill="#111"/><rect x="0" y="0" width="1.5" height="181" fill="#111"/><rect x="129" y="0" width="1.8" height="181" fill="#111"/></svg>
<div class="t" style="left:84.3px;top:174.50px;font-size:8.5px;color:#c9f3d6;transform:scaleX(0.889);-webkit-text-stroke:0.1px currentColor">Fecha</div>
<div class="t" style="left:142.5px;top:168.80px;font-size:8.5px;color:#c9f3d6;transform:scaleX(0.933);-webkit-text-stroke:0.1px currentColor">Unidades</div>
<div class="t" style="left:139px;top:180.80px;font-size:8.5px;color:#c9f3d6;transform:scaleX(0.955);-webkit-text-stroke:0.1px currentColor">entregadas</div>
<div class="t" style="left:84.5px;top:193.85px;font-size:8.5px;color:#333;transform:scaleX(0.977);">06-jul</div>
<div class="t" style="left:159.5px;top:193.85px;font-size:8.5px;color:#333;width:0;display:flex;justify-content:center">995</div>
<div class="t" style="left:84.5px;top:205.60px;font-size:8.5px;color:#333;transform:scaleX(0.977);">06-jul</div>
<div class="t" style="left:159.5px;top:205.60px;font-size:8.5px;color:#333;width:0;display:flex;justify-content:center">994</div>
<div class="t" style="left:84.5px;top:217.35px;font-size:8.5px;color:#333;transform:scaleX(0.977);">06-jul</div>
<div class="t" style="left:159.5px;top:217.35px;font-size:8.5px;color:#333;width:0;display:flex;justify-content:center">792</div>
<div class="t" style="left:84.5px;top:229.10px;font-size:8.5px;color:#333;transform:scaleX(0.977);">12-jul</div>
<div class="t" style="left:159.5px;top:229.10px;font-size:8.5px;color:#333;width:0;display:flex;justify-content:center">902</div>
<div class="t" style="left:84.5px;top:240.85px;font-size:8.5px;color:#333;transform:scaleX(0.977);">12-jul</div>
<div class="t" style="left:159.5px;top:240.85px;font-size:8.5px;color:#333;width:0;display:flex;justify-content:center">2209</div>
<div class="t" style="left:84.5px;top:252.60px;font-size:8.5px;color:#333;transform:scaleX(0.977);">12-jul</div>
<div class="t" style="left:159.5px;top:252.60px;font-size:8.5px;color:#333;width:0;display:flex;justify-content:center">1302</div>
<div class="t" style="left:84.5px;top:264.35px;font-size:8.5px;color:#333;transform:scaleX(0.977);">12-jul</div>
<div class="t" style="left:159.5px;top:264.35px;font-size:8.5px;color:#333;width:0;display:flex;justify-content:center">732</div>
<div class="t" style="left:84.5px;top:276.10px;font-size:8.5px;color:#333;transform:scaleX(0.977);">18-jul</div>
<div class="t" style="left:159.5px;top:276.10px;font-size:8.5px;color:#333;width:0;display:flex;justify-content:center">537</div>
<div class="t" style="left:84.5px;top:287.85px;font-size:8.5px;color:#333;transform:scaleX(0.977);">18-jul</div>
<div class="t" style="left:159.5px;top:287.85px;font-size:8.5px;color:#333;width:0;display:flex;justify-content:center">516</div>
<div class="t" style="left:84.5px;top:299.60px;font-size:8.5px;color:#333;transform:scaleX(0.977);">18-jul</div>
<div class="t" style="left:159.5px;top:299.60px;font-size:8.5px;color:#333;width:0;display:flex;justify-content:center">1264</div>
<div class="t" style="left:84.5px;top:311.35px;font-size:8.5px;color:#333;transform:scaleX(0.977);">18-jul</div>
<div class="t" style="left:159.5px;top:311.35px;font-size:8.5px;color:#333;width:0;display:flex;justify-content:center">943</div>
<div class="t" style="left:84.5px;top:323.10px;font-size:8.5px;color:#333;transform:scaleX(0.977);">18-jul</div>
<div class="t" style="left:159.5px;top:323.10px;font-size:8.5px;color:#333;width:0;display:flex;justify-content:center">443</div>
<div class="t b" style="left:80.4px;top:336.07px;font-size:9.6px;color:#d8f7e1;font-weight:bold;transform:scaleX(0.932);-webkit-text-stroke:0.3px currentColor">TOTAL</div>
<div class="t b" style="left:145.6px;top:336.07px;font-size:9.6px;color:#d8f7e1;font-weight:bold;transform:scaleX(1.093);-webkit-text-stroke:0.3px currentColor">11629</div>
<div class="abs" style="left:633px;top:142px;width:167px;height:270px;background:#e6e6e6"></div>
<div class="t b" style="left:642px;top:153.02px;font-size:12.5px;color:#217346;transform:scaleX(0.971);">Formato de forma</div>
<svg class="abs" style="left:759.5px;top:155px;" width="6" height="3" viewBox="0 0 6 3"><path d="M0 0 H6 L3 3Z" fill="#555"/></svg>
<svg class="abs" style="left:783px;top:154px;" width="7" height="7" viewBox="0 0 7 7"><path d="M0.5 0.5 L6.5 6.5 M6.5 0.5 L0.5 6.5" stroke="#555" stroke-width="1.1" fill="none"/></svg>
<div class="t" style="left:644.5px;top:173.73px;font-size:8px;color:#444;transform:scaleX(0.873);">Opciones de forma</div>
<div class="t b" style="left:714.5px;top:173.73px;font-size:8px;color:#222;font-weight:bold;transform:scaleX(0.858);">Opciones de texto</div>
<div class="abs" style="left:643px;top:188px;width:17px;height:17px;background:#b9b9b9"></div>
<svg class="abs" style="left:643px;top:188px;" width="17" height="17" viewBox="0 0 17 17"><path d="M4.5 11.5 L8.5 2.8 L12.5 11.5 M6 8.5 H11" fill="none" stroke="#1e7145" stroke-width="1.7"/><rect x="2" y="12.5" width="13" height="3" fill="#1e7145"/></svg>
<svg class="abs" style="left:669px;top:189px;" width="12" height="14" viewBox="0 0 12 14"><path d="M1.5 12 L6 1 L10.5 12 M3.5 8 H8.5" fill="none" stroke="#8a8a8a" stroke-width="1.1"/><circle cx="6" cy="11" r="2" fill="#e6e6e6" stroke="#999"/></svg>
<svg class="abs" style="left:692px;top:189px;" width="13" height="14" viewBox="0 0 13 14"><rect x="0.5" y="0.5" width="12" height="13" fill="#efefef" stroke="#8a8a8a"/><path d="M2.5 7.5 L4.5 2.5 L6.5 7.5 M3.2 5.8 H5.8" fill="none" stroke="#777" stroke-width="1"/><path d="M7.5 3.5 H10.5 M7.5 5.5 H10.5 M2.5 9.5 H10.5 M2.5 11.5 H10.5" fill="none" stroke="#999" stroke-width="0.8"/></svg>
<div class="abs" style="left:645px;top:212.5px;width:148px;height:1px;background:#cfcfcf"></div>
<svg class="abs" style="left:647px;top:208px;" width="9" height="5" viewBox="0 0 9 5"><path d="M0 5 L4.5 1 L9 5" fill="#e6e6e6" stroke="#d8d8d8"/></svg>
<svg class="abs" style="left:646px;top:220px;" width="4" height="4" viewBox="0 0 4 4"><path d="M4 0 V4 H0Z" fill="#444"/></svg>
<div class="t b" style="left:654.5px;top:219.23px;font-size:8px;color:#12734a;font-weight:bold;transform:scaleX(0.890);">Relleno de texto</div>
<svg class="abs" style="left:654px;top:235.1px;" width="9" height="9" viewBox="0 0 9 9"><circle cx="4.5" cy="4.5" r="3.3" fill="#fff" stroke="#c0c0c0" stroke-width="0.9"/></svg>
<div class="t" style="left:664.7px;top:235.83px;font-size:8px;color:#333;transform:scaleX(0.855);">Sin relleno</div>
<svg class="abs" style="left:654px;top:248.1px;" width="9" height="9" viewBox="0 0 9 9"><circle cx="4.5" cy="4.5" r="3.3" fill="#fff" stroke="#c0c0c0" stroke-width="0.9"/><circle cx="4.5" cy="4.5" r="1.6" fill="#444"/></svg>
<div class="t" style="left:664.7px;top:248.83px;font-size:8px;color:#333;transform:scaleX(0.868);">Relleno sólido</div>
<svg class="abs" style="left:654px;top:261.1px;" width="9" height="9" viewBox="0 0 9 9"><circle cx="4.5" cy="4.5" r="3.3" fill="#fff" stroke="#c0c0c0" stroke-width="0.9"/></svg>
<div class="t" style="left:664.7px;top:261.83px;font-size:8px;color:#333;transform:scaleX(0.865);">Relleno degradado</div>
<svg class="abs" style="left:654px;top:274.1px;" width="9" height="9" viewBox="0 0 9 9"><circle cx="4.5" cy="4.5" r="3.3" fill="#fff" stroke="#c0c0c0" stroke-width="0.9"/></svg>
<div class="t" style="left:664.7px;top:274.83px;font-size:8px;color:#333;transform:scaleX(0.873);">Relleno con imagen o textura</div>
<svg class="abs" style="left:654px;top:287.1px;" width="9" height="9" viewBox="0 0 9 9"><circle cx="4.5" cy="4.5" r="3.3" fill="#fff" stroke="#c0c0c0" stroke-width="0.9"/></svg>
<div class="t" style="left:664.7px;top:287.83px;font-size:8px;color:#333;transform:scaleX(0.855);">Relleno de trama</div>
<div class="t" style="left:659.8px;top:309.63px;font-size:8px;color:#333;transform:scaleX(0.910);">Color</div>
<div class="abs" style="left:754.5px;top:304.5px;width:26px;height:16px;background:#fff;border:1px solid #d0d0d0"></div>
<svg class="abs" style="left:760px;top:308px;" width="9" height="8" viewBox="0 0 9 8"><path d="M1 4 L4 1 L7 4 L4 7Z" fill="none" stroke="#666"/><path d="M7 4 Q8.5 6 7.5 7" stroke="#666" fill="none"/></svg>
<svg class="abs" style="left:773.5px;top:311.5px;" width="4" height="2.5" viewBox="0 0 4 2.5"><path d="M0 0 H4 L2 2.5Z" fill="#555"/></svg>
<div class="t" style="left:660.9px;top:326.93px;font-size:8px;color:#333;transform:scaleX(0.836);">Transparencia</div>
<div class="abs" style="left:708.5px;top:326px;width:1px;height:7px;background:#777"></div>
<div class="abs" style="left:709px;top:329px;width:25px;height:1px;background:#999"></div>
<div class="abs" style="left:737.4px;top:324.4px;width:43px;height:12px;background:#fff;border:1px solid #d0d0d0"></div>
<div class="t" style="left:742px;top:327.15px;font-size:7.5px;color:#444;transform:scaleX(0.774);">0 %</div>
<svg class="abs" style="left:773.5px;top:326.5px;" width="4" height="8" viewBox="0 0 4 8"><path d="M0 2.5 L2 0 L4 2.5Z M0 5.5 H4 L2 8Z" fill="#555"/></svg>
<svg class="abs" style="left:647px;top:346px;" width="4" height="7" viewBox="0 0 4 7"><path d="M0.5 0.5 L3.5 3.5 L0.5 6.5Z" fill="none" stroke="#888"/></svg>
<div class="t b" style="left:654.5px;top:347.23px;font-size:8px;color:#222;font-weight:bold;transform:scaleX(0.874);">Contorno de texto</div>
<svg class="abs" style="left:270px;top:222px;" width="90" height="85" viewBox="0 0 90 85"><path d="M23.5 25 H63 V52 H82 L43 78.7 L3.8 52 H23.5Z" fill="#1f6fc6"/><path d="M3.8 25 H82.5 V78.7 H3.8Z" fill="none" stroke="#9a9a9a" stroke-width="0.8"/><path d="M43 25 V11" stroke="#9a9a9a" stroke-width="0.8"/><path d="M47.2 3.5 A5 5 0 1 0 48 6.5" fill="#fff" stroke="#8a8a8a" stroke-width="1.3"/><path d="M45.5 2.5 L48.5 2.2 L48 5.2" fill="none" stroke="#8a8a8a" stroke-width="1.1"/><circle cx="43" cy="5.2" r="2.3" fill="none" stroke="#9a9a9a" stroke-width="0.9"/><circle cx="3.8" cy="25" r="3.1" fill="#fff" stroke="#777" stroke-width="0.9"/><circle cx="43" cy="25" r="3.1" fill="#fff" stroke="#777" stroke-width="0.9"/><circle cx="82.5" cy="25" r="3.1" fill="#fff" stroke="#777" stroke-width="0.9"/><circle cx="3.8" cy="78.7" r="3.1" fill="#fff" stroke="#777" stroke-width="0.9"/><circle cx="43" cy="78.7" r="3.1" fill="#fff" stroke="#777" stroke-width="0.9"/><circle cx="82.5" cy="78.7" r="3.1" fill="#fff" stroke="#777" stroke-width="0.9"/><circle cx="82.5" cy="52" r="3.1" fill="#fff" stroke="#777" stroke-width="0.9"/><circle cx="23.5" cy="25" r="3.1" fill="#f0a33c" stroke="#c08030" stroke-width="0.6"/><circle cx="3.8" cy="52" r="3.1" fill="#f0a33c" stroke="#c08030" stroke-width="0.6"/></svg>
<div class="abs" style="left:335px;top:295.5px;width:89.5px;height:36.5px;background:#fff;border:1px solid #d6d6d6;box-shadow:0 1px 2px rgba(0,0,0,0.15)"></div>
<svg class="abs" style="left:342px;top:300px;" width="16" height="13" viewBox="0 0 16 13"><path d="M0.5 0.5 H9 L12 3.5 L4 12.5 H0.5Z" fill="#fff" stroke="#666"/><path d="M2 12.5 L5 9.5 L6 12.5Z" fill="#1e9ab0"/><path d="M6 10 L12 4" stroke="#444" stroke-width="1.3"/><path d="M13.5 4.5 H17 L15.25 6.5Z" fill="#555"/></svg>
<div class="t" style="left:340px;top:316.83px;font-size:8px;color:#444;transform:scaleX(0.828);">Estilo</div>
<svg class="abs" style="left:367px;top:299px;" width="18" height="14" viewBox="0 0 18 14"><path d="M5 1 L11 6 L6 10 L1 6Z" fill="#fff" stroke="#555"/><path d="M11 6 Q13 8 12 10" fill="none" stroke="#2b6cb3" stroke-width="1.2"/><rect x="0" y="11" width="14" height="2.5" fill="#e87d2b"/><path d="M15.5 4.5 H19 L17.25 6.5Z" fill="#555"/></svg>
<div class="t" style="left:362.5px;top:316.83px;font-size:8px;color:#444;transform:scaleX(0.829);">Relleno</div>
<svg class="abs" style="left:398px;top:299px;" width="18" height="14" viewBox="0 0 18 14"><path d="M0.5 10 V0.5 H8" fill="none" stroke="#aaa"/><path d="M3 9 L11 1" stroke="#2b6cb3" stroke-width="1.5"/><rect x="0" y="11" width="14" height="2.5" fill="#2b6cb3"/><path d="M15.5 4.5 H19 L17.25 6.5Z" fill="#555"/></svg>
<div class="t" style="left:391px;top:316.83px;font-size:8px;color:#444;transform:scaleX(0.863);">Contorno</div>
<div class="abs" style="left:334.5px;top:49px;width:157px;height:237px;background:#fff;border:1px solid #c8c8c8;box-shadow:1px 2px 3px rgba(0,0,0,0.18)"></div>
<div class="abs" style="left:350px;top:79.2px;width:141px;height:12.3px;background:#e8e8e8"></div>
<div class="t" style="left:355px;top:53.93px;font-size:8px;color:#363636;transform:scaleX(0.846);-webkit-text-stroke:0.12px currentColor">Cortar</div>
<div class="t" style="left:355px;top:67.83px;font-size:8px;color:#363636;transform:scaleX(0.849);-webkit-text-stroke:0.12px currentColor">Copiar</div>
<div class="t b" style="left:355px;top:81.73px;font-size:8px;color:#262626;font-weight:bold;transform:scaleX(0.829);">Opciones de pegado:</div>
<div class="t" style="left:355px;top:113.63px;font-size:8px;color:#363636;transform:scaleX(0.860);-webkit-text-stroke:0.12px currentColor">Editar texto</div>
<div class="t" style="left:355px;top:128.13px;font-size:8px;color:#363636;transform:scaleX(0.898);-webkit-text-stroke:0.12px currentColor">Modificar puntos</div>
<div class="t" style="left:355px;top:142.83px;font-size:8px;color:#b0b0b0;transform:scaleX(0.857);-webkit-text-stroke:0.12px currentColor">Agrupar</div>
<div class="t" style="left:355px;top:156.83px;font-size:8px;color:#b0b0b0;transform:scaleX(0.833);-webkit-text-stroke:0.12px currentColor">Traer al frente</div>
<div class="t" style="left:355px;top:170.83px;font-size:8px;color:#b0b0b0;transform:scaleX(0.855);-webkit-text-stroke:0.12px currentColor">Enviar al fondo</div>
<div class="t" style="left:355px;top:186.23px;font-size:8px;color:#363636;transform:scaleX(0.858);-webkit-text-stroke:0.12px currentColor">Vínculo</div>
<div class="t" style="left:355px;top:201.73px;font-size:8px;color:#363636;transform:scaleX(0.873);-webkit-text-stroke:0.12px currentColor">Búsqueda inteligente</div>
<div class="t" style="left:355px;top:217.23px;font-size:8px;color:#363636;transform:scaleX(0.859);-webkit-text-stroke:0.12px currentColor">Asignar macro...</div>
<div class="t" style="left:355px;top:232.73px;font-size:8px;color:#363636;transform:scaleX(0.863);-webkit-text-stroke:0.12px currentColor">Editar texto alternativo...</div>
<div class="t" style="left:355px;top:246.13px;font-size:8px;color:#363636;transform:scaleX(0.868);-webkit-text-stroke:0.12px currentColor">Establecer como forma predeterminada</div>
<div class="t" style="left:355px;top:260.23px;font-size:8px;color:#363636;transform:scaleX(0.856);-webkit-text-stroke:0.12px currentColor">Tamaño y propiedades...</div>
<div class="t" style="left:355px;top:274.43px;font-size:8px;color:#333;transform:scaleX(0.876);-webkit-text-stroke:0.12px currentColor">Formato de forma...</div>
<div class="abs" style="left:354.5px;top:109.4px;width:136px;height:1px;background:#e6e6e6"></div>
<div class="abs" style="left:354.5px;top:138.3px;width:136px;height:1px;background:#e6e6e6"></div>
<div class="abs" style="left:354.5px;top:181.7px;width:136px;height:1px;background:#e6e6e6"></div>
<div class="abs" style="left:354.5px;top:197.5px;width:136px;height:1px;background:#e6e6e6"></div>
<div class="abs" style="left:354.5px;top:213px;width:136px;height:1px;background:#e6e6e6"></div>
<div class="abs" style="left:354.5px;top:227.7px;width:136px;height:1px;background:#e6e6e6"></div>
<svg class="abs" style="left:482.5px;top:143.5px;" width="3" height="5" viewBox="0 0 3 5"><path d="M0 0 L3 2.5 L0 5Z" fill="#555"/></svg>
<svg class="abs" style="left:482.5px;top:158.0px;" width="3" height="5" viewBox="0 0 3 5"><path d="M0 0 L3 2.5 L0 5Z" fill="#555"/></svg>
<svg class="abs" style="left:482.5px;top:172.0px;" width="3" height="5" viewBox="0 0 3 5"><path d="M0 0 L3 2.5 L0 5Z" fill="#555"/></svg>
<div class="abs" style="left:478px;top:156px;width:1px;height:10px;background:#e6e6e6"></div>
<div class="abs" style="left:478px;top:170px;width:1px;height:10px;background:#e6e6e6"></div>
<svg class="abs" style="left:338.5px;top:53.5px;" width="9" height="9" viewBox="0 0 9 9"><path d="M1.5 0.5 L6 6 M7.5 0.5 L3 6" stroke="#444"/><circle cx="2.5" cy="7" r="1.6" fill="none" stroke="#2b6cb3"/><circle cx="6.5" cy="7" r="1.6" fill="none" stroke="#2b6cb3"/></svg>
<svg class="abs" style="left:338.5px;top:67.5px;" width="10" height="9" viewBox="0 0 10 9"><path d="M0.5 0.5 H5 L6.5 2 V6.5 H0.5Z" fill="#fff" stroke="#777"/><path d="M3.5 2.5 H8 L9.5 4 V8.5 H3.5Z" fill="#fff" stroke="#777"/><path d="M5 5 H8 M5 6.5 H8" stroke="#aaa" stroke-width="0.6"/></svg>
<svg class="abs" style="left:338px;top:81px;" width="11" height="10" viewBox="0 0 11 10"><rect x="0.5" y="1.5" width="6" height="8" fill="#f3b562" stroke="#a86c2a" stroke-width="0.6"/><rect x="2" y="0.5" width="3" height="2" fill="#fff" stroke="#777" stroke-width="0.6"/><path d="M4.5 4.5 H8 L10 6.5 V9.5 H4.5Z" fill="#fff" stroke="#555" stroke-width="0.8"/></svg>
<svg class="abs" style="left:353px;top:94.4px;" width="13" height="13.5" viewBox="0 0 13 13.5"><rect x="0.5" y="2" width="8" height="11" fill="#f3b562" stroke="#b97a35" stroke-width="0.6"/><rect x="2.5" y="0.5" width="4" height="3" fill="#fff" stroke="#777" stroke-width="0.7"/><path d="M5.5 6 H10 L12.5 8.5 V13 H5.5Z" fill="#fff" stroke="#555" stroke-width="0.9"/></svg>
<svg class="abs" style="left:338.5px;top:113px;" width="10" height="9" viewBox="0 0 10 9"><rect x="0.5" y="0.5" width="9" height="8" fill="#fff" stroke="#777"/><path d="M2 5.5 L3.5 2 L5 5.5 M2.5 4.3 H4.5 M6 3 H8 M2 7 H8" fill="none" stroke="#666" stroke-width="0.7"/></svg>
<svg class="abs" style="left:338.5px;top:127px;" width="11" height="10" viewBox="0 0 11 10"><path d="M1 5 L5 1 L10 5 L5.5 9Z" fill="none" stroke="#2b6cb3" stroke-dasharray="1.2 1.2"/><rect x="0" y="4" width="2" height="2" fill="#2b6cb3"/><rect x="4" y="0" width="2" height="2" fill="#2b6cb3"/><rect x="9" y="4" width="2" height="2" fill="#2b6cb3"/><rect x="4.5" y="8" width="2" height="2" fill="#2b6cb3"/><rect x="0" y="0" width="2" height="2" fill="#2b6cb3"/><rect x="9" y="8" width="2" height="2" fill="#2b6cb3"/></svg>
<svg class="abs" style="left:338.5px;top:141.5px;" width="10" height="10" viewBox="0 0 10 10"><rect x="0.5" y="0.5" width="9" height="9" fill="none" stroke="#c0c0c0" stroke-dasharray="1.4 1"/><path d="M3 3 H7 V7 H3Z" fill="none" stroke="#c0c0c0"/></svg>
<svg class="abs" style="left:338.5px;top:155.5px;" width="10" height="10" viewBox="0 0 10 10"><rect x="0.5" y="0.5" width="5" height="5" fill="none" stroke="#c0c0c0"/><rect x="4" y="4" width="5.5" height="5.5" fill="#eee" stroke="#c0c0c0"/></svg>
<svg class="abs" style="left:338.5px;top:169.5px;" width="10" height="10" viewBox="0 0 10 10"><rect x="4" y="4" width="5.5" height="5.5" fill="none" stroke="#c0c0c0"/><rect x="0.5" y="0.5" width="5" height="5" fill="#eee" stroke="#c0c0c0"/></svg>
<svg class="abs" style="left:338px;top:184px;" width="11" height="11" viewBox="0 0 11 11"><circle cx="4.5" cy="4" r="3.5" fill="#fff" stroke="#777"/><path d="M1 4 H8 M4.5 0.5 V7.5" stroke="#999" stroke-width="0.6"/><rect x="1.5" y="6.5" width="4" height="3.2" rx="1.6" fill="none" stroke="#2b6cb3" stroke-width="1.1"/><rect x="5" y="6.5" width="4" height="3.2" rx="1.6" fill="none" stroke="#2b6cb3" stroke-width="1.1"/></svg>
<svg class="abs" style="left:338px;top:200px;" width="11" height="11" viewBox="0 0 11 11"><circle cx="6" cy="4.5" r="3.8" fill="none" stroke="#2b6cb3" stroke-width="1.1"/><path d="M3.2 7.2 L0.5 10" stroke="#2b6cb3" stroke-width="1.5"/><path d="M6 3 V6.5" stroke="#2b6cb3"/></svg>
<svg class="abs" style="left:338px;top:232px;" width="11" height="10" viewBox="0 0 11 10"><rect x="0.5" y="0.5" width="8" height="7" fill="#fff" stroke="#777"/><path d="M1.5 6.5 L4 3.5 L6 6" fill="#2b6cb3"/><rect x="6" y="6" width="4.5" height="3.5" fill="#ccc" stroke="#888" stroke-width="0.5"/></svg>
<svg class="abs" style="left:338.5px;top:259px;" width="11" height="11" viewBox="0 0 11 11"><path d="M2 0.5 V10.5" stroke="#2b6cb3" stroke-dasharray="1.5 1.2" stroke-width="1.5"/><rect x="5" y="0.5" width="5" height="10" fill="#fff" stroke="#777"/></svg>
<svg class="abs" style="left:338.5px;top:273px;" width="11" height="11" viewBox="0 0 11 11"><path d="M1.5 4.5 L4.5 1.5 L8 5 L5 8Z" fill="#fff" stroke="#555" stroke-width="0.9"/><path d="M3 2.5 Q2.5 0 4.5 0.5" fill="none" stroke="#555" stroke-width="0.7"/><path d="M3 10.5 L9.5 4.5" stroke="#2b6cb3" stroke-width="1.4"/><path d="M0.5 10.5 Q1.5 8.5 3 9" fill="none" stroke="#2b6cb3" stroke-width="1"/></svg>
<svg class="abs" style="left:425px;top:270px;" width="120" height="75" viewBox="0 0 120 75"><path transform="translate(-425 -270)" d="M432 280.5 C440 275.5 462 276.5 478 278.5 L480.5 285.5 C472 288.5 461 290 454 291 C480 299 515 306 540 297.8 C528 310.5 490 314 452 297.5 L470.5 337 C459 321 445 301 432 284 Z" fill="#f20d14"/></svg>
</body></html>
